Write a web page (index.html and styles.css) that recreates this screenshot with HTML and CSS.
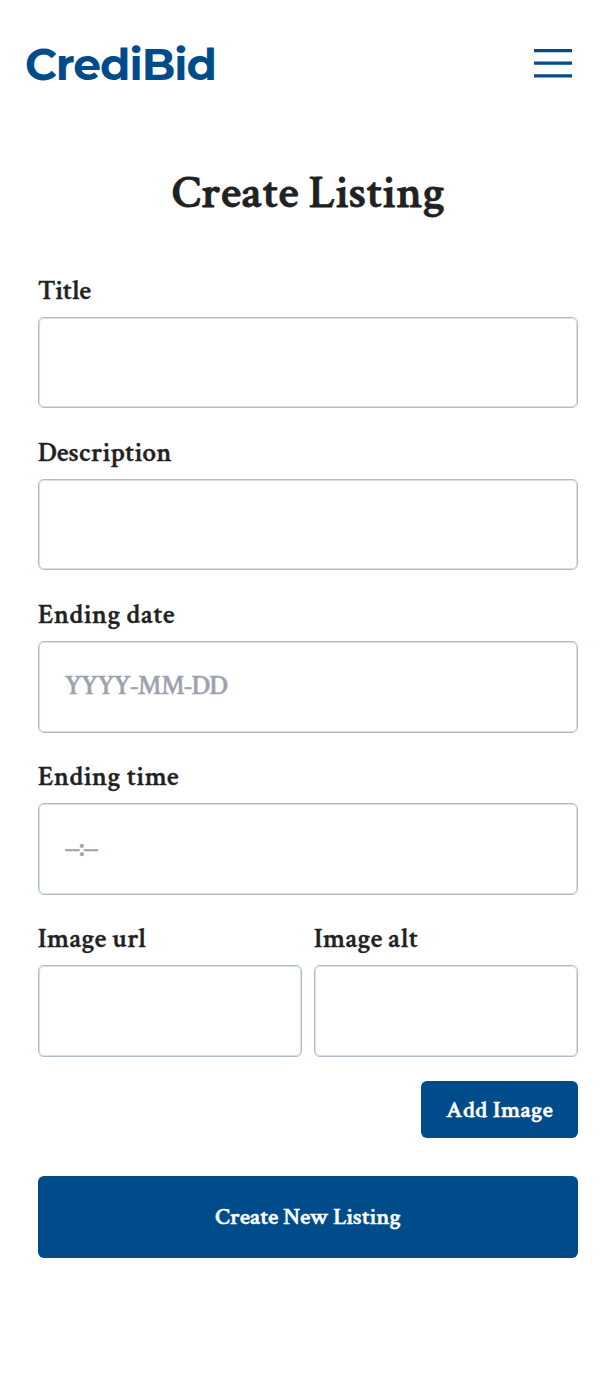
FILE: index.html
```html
<!DOCTYPE html>
<html lang="en">
<head>
<meta charset="utf-8">
<title>CrediBid</title>
<link rel="stylesheet" href="styles.css">
</head>
<body>
<header class="header">
  <div class="logo">CrediBid</div>
  <svg class="menu" viewBox="0 0 38 30" aria-label="Menu"><path d="M0 2.6H38M0 15.1H38M0 27.8H38"/></svg>
</header>
<main class="main">
  <h1 class="heading">Create Listing</h1>
  <form class="form">
    <label class="field"><span class="label title">Title</span><span class="box"></span></label>
    <label class="field"><span class="label">Description</span><span class="box"></span></label>
    <label class="field"><span class="label ending">Ending date</span><span class="box date">YYYY-MM-DD</span></label>
    <label class="field"><span class="label ending">Ending time</span><span class="box time">--:--</span></label>
    <div class="images">
      <label class="field"><span class="label">Image url</span><span class="box"></span></label>
      <label class="field"><span class="label">Image alt</span><span class="box"></span></label>
    </div>
    <button class="button add" type="button">Add Image</button>
    <button class="button submit" type="button">Create New Listing</button>
  </form>
</main>
</body>
</html>
```
FILE: styles.css
```css
* { box-sizing: border-box; }
body {
  margin: 0;
  min-height: 1383px;
  background: #fff;
  color: #212121;
  font-family: "Crimson Text", "Liberation Serif", serif;
  font-weight: 600;
  -webkit-text-stroke: .4px;
}
.header {
  display: flex;
  justify-content: space-between;
  height: 126px;
  padding: 36px 44px 0 25px;
}
.logo {
  color: #004c8a;
  font: 700 44px/57px Montserrat, Inter, sans-serif;
  letter-spacing: -1.05px;
  -webkit-text-stroke: 0;
}
.menu { width: 38px; height: 30px; margin-top: 12px; fill: none; stroke: #004c8a; stroke-width: 3.2; }
.main { padding: 0 38px; }
.heading {
  margin: 0;
  padding: 38px 0 0 1px;
  height: 151px;
  font-size: 46.5px;
  font-weight: 600;
  line-height: 58px;
  text-align: center;
  letter-spacing: .4px;
  -webkit-text-stroke: .8px;
}
.form { display: flex; flex-direction: column; }
.field { display: flex; flex-direction: column; height: 162.1px; }
.label { height: 40px; font-size: 27px; line-height: 28px; letter-spacing: .35px; white-space: nowrap; }
.title { letter-spacing: -.1px; }
.ending { letter-spacing: .47px; }
.box {
  height: 91.4px;
  padding: 0 25.5px;
  border: 1px solid #aebcc7;
  box-shadow: inset 0 0 0 1px #d9e1e6;
  border-radius: 6px;
  color: #9ca3af;
  font-size: 27px;
  line-height: 88px;
}
.date { letter-spacing: -.95px; }
.time { letter-spacing: -1.2px; }
.images { display: grid; grid-template-columns: 1fr 1fr; gap: 12px; height: 156px; }
.button {
  border: 0;
  border-radius: 6px;
  background: #004c8a;
  color: #fff;
  font: inherit;
  font-size: 23.5px;
  -webkit-text-stroke: .5px;
}
.add { align-self: flex-end; width: 157px; height: 57px; padding: 0; letter-spacing: .4px; }
.submit { height: 82px; margin-top: 38px; }
```
